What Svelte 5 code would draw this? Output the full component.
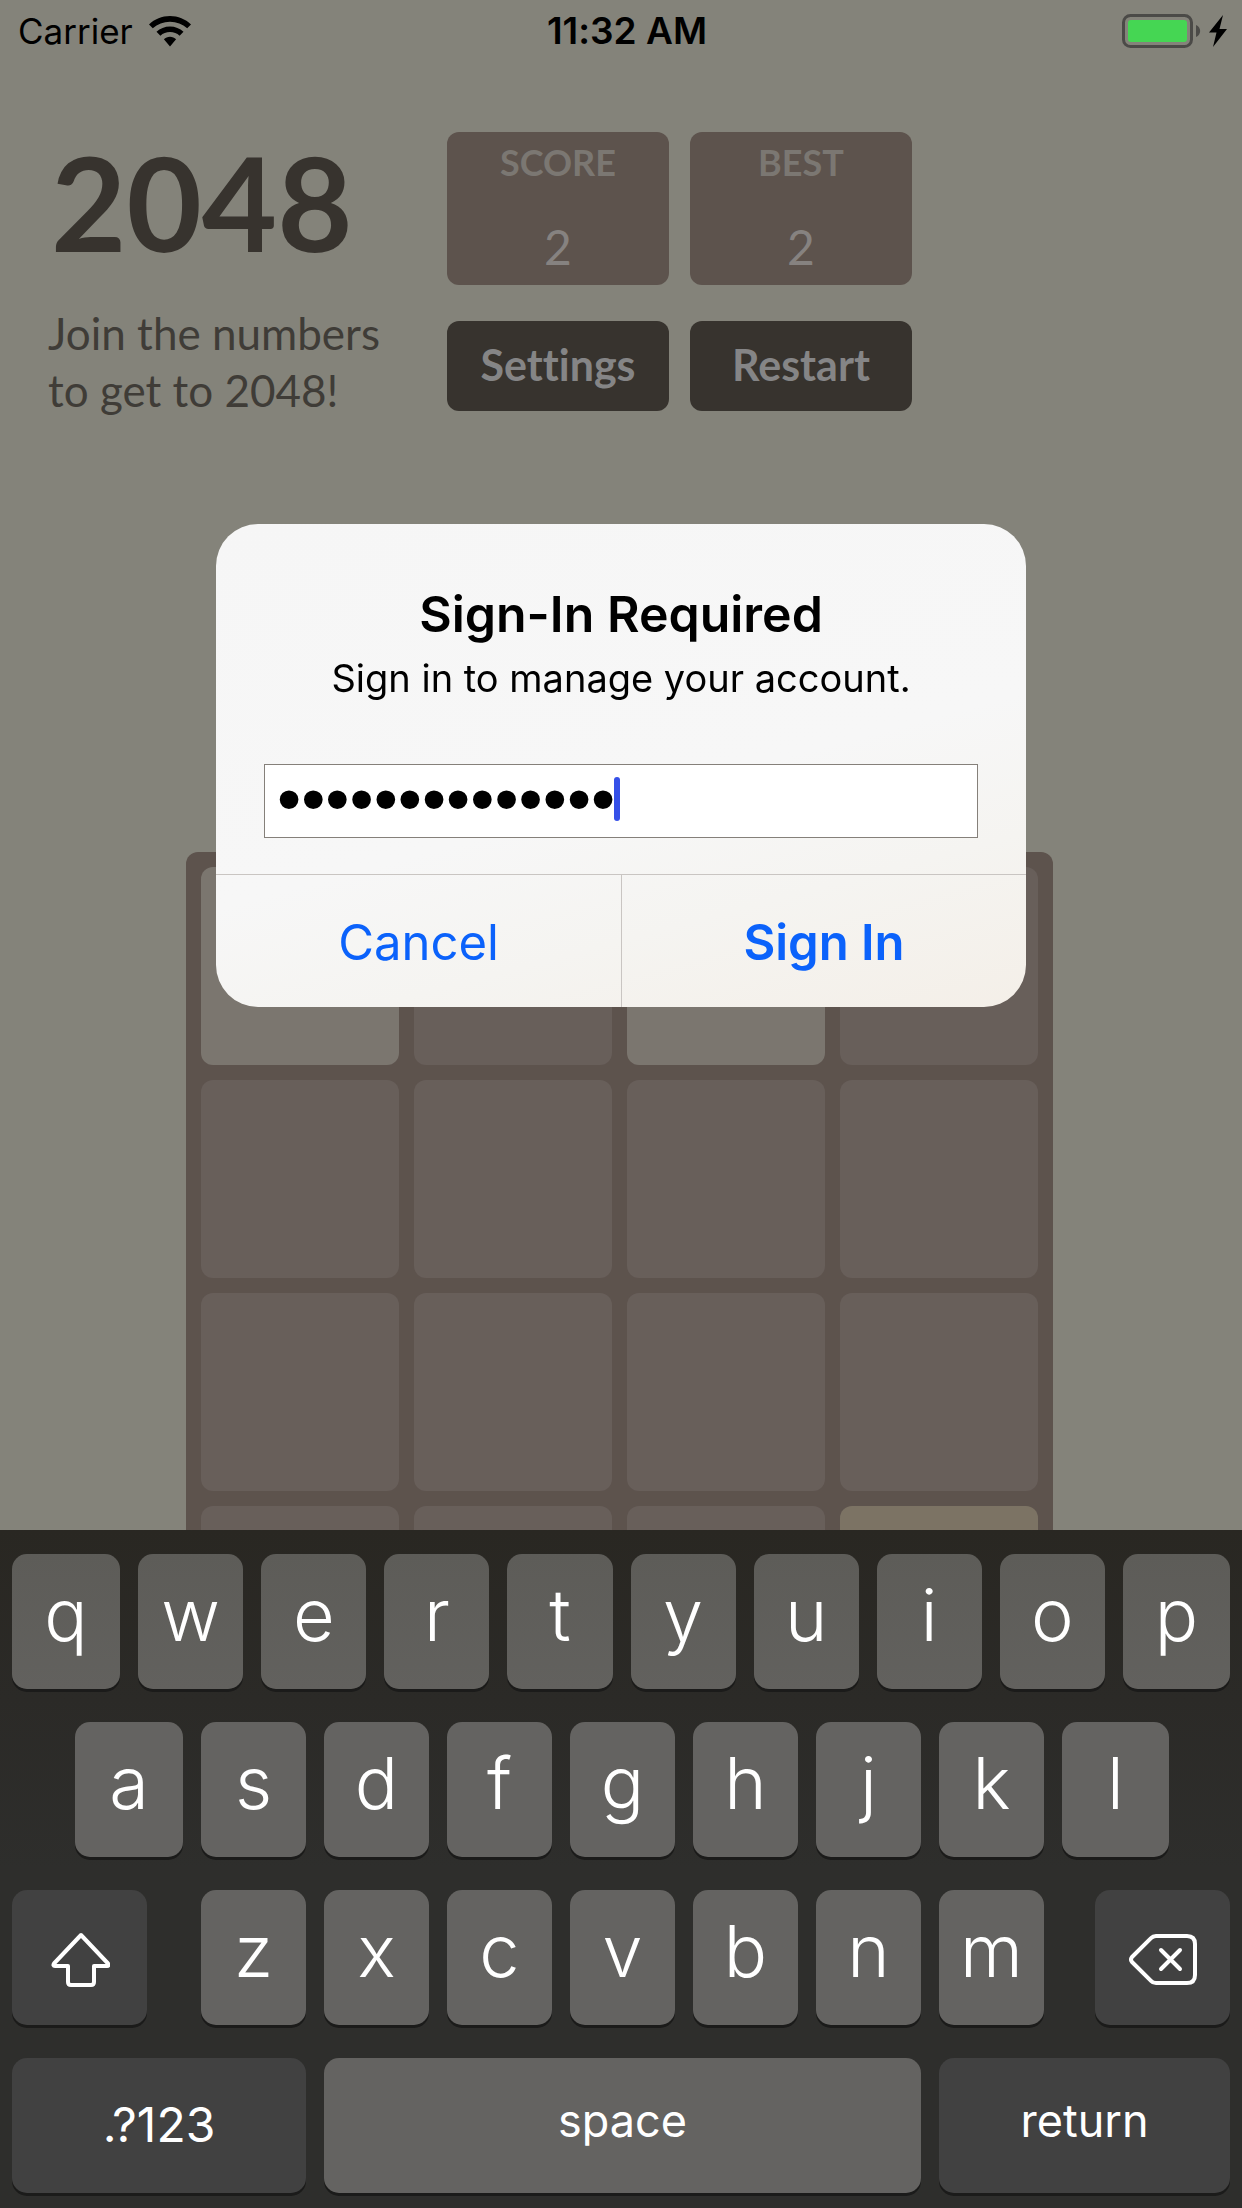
<script>
  const rows = ['qwertyuiop', 'asdfghjkl', 'zxcvbnm'].map((r) => r.split(''));
  const light = [0, 2];
  const cells = Array.from({ length: 16 }, (_, i) =>
    light.includes(i) ? 'two' : i === 15 ? 'four' : ''
  );
  let password = $state('password123456');
</script>

<div class="game">
  <header class="status">
    <div class="carrier">
      <span>Carrier</span>
      <svg width="42" height="31" viewBox="0 0 42 31" aria-hidden="true">
        <path d="M21 0C13 0 5.600 3 0 8.500l3.800 3.800C8.500 8 14.400 5.800 21 5.800s12.500 2.200 17.200 6.500L42 8.500C36.400 3 29 0 21 0z" />
        <path d="M21 10.500c-5.200 0-9.900 2-13.500 5.300l3.900 3.900c2.600-2.300 5.900-3.600 9.600-3.600s7 1.300 9.600 3.600l3.900-3.900C30.900 12.500 26.200 10.500 21 10.500z" />
        <path d="M21 20.800c-2.400 0-4.500.9-6.100 2.400L21 30.500l6.100-7.300c-1.600-1.500-3.700-2.400-6.100-2.400z" />
      </svg>
    </div>
    <time>11:32 AM</time>
    <div class="power">
      <svg width="106" height="34" viewBox="0 0 106 34" aria-label="Battery charging">
        <rect x="1.500" y="1.500" width="68" height="31" rx="7" fill="none" stroke="#4b4a47" stroke-width="3" />
        <rect x="6" y="6" width="59" height="22" rx="3" fill="#45d653" />
        <path d="M74 11c5.500 2 5.500 10 0 12z" fill="#4b4a47" />
        <path d="M101 1L87 18.500h7.500L91 33l14-18h-7.500z" />
      </svg>
    </div>
  </header>

  <section class="top">
    <div class="intro">
      <h1>2048</h1>
      <p>Join the numbers<br />to get to 2048!</p>
    </div>
    <div class="panel">
      <div class="score"><b>SCORE</b><span>2</span></div>
      <div class="score"><b>BEST</b><span>2</span></div>
      <button type="button">Settings</button>
      <button type="button">Restart</button>
    </div>
  </section>

  <div class="board">
    {#each cells as c}<div class="cell {c}"></div>{/each}
  </div>
</div>

<div class="overlay">
  <div class="center">
    <form class="dialog" role="dialog" aria-labelledby="title" onsubmit={(e) => e.preventDefault()}>
      <div class="body">
        <h2 id="title">Sign-In Required</h2>
        <label for="pw">Sign in to manage your account.</label>
        <div class="field">
          <input id="pw" type="password" bind:value={password} />
          <span class="caret"></span>
        </div>
      </div>
      <div class="actions">
        <button type="button">Cancel</button>
        <button type="submit" class="strong">Sign In</button>
      </div>
    </form>
  </div>

  <div class="keyboard">
    <div class="row first">
      {#each rows[0] as k}<button type="button" class="key">{k}</button>{/each}
    </div>
    <div class="row second">
      {#each rows[1] as k}<button type="button" class="key">{k}</button>{/each}
    </div>
    <div class="row third">
      <button type="button" class="key dark" aria-label="Shift">
        <svg width="60" height="62" viewBox="0 0 60 62" aria-hidden="true">
          <path d="M31 3L4 31.500q-1.500 2.500 1 2.500h13v16q0 3 3 3h20q3 0 3-3V34h13q2.500 0 1-2.500z" />
        </svg>
      </button>
      <div class="row letters">
        {#each rows[2] as k}<button type="button" class="key">{k}</button>{/each}
      </div>
      <button type="button" class="key dark" aria-label="Delete">
        <svg width="68" height="60" viewBox="0 0 68 60" aria-hidden="true">
          <path d="M27 3h31q8 0 8 8v31q0 8-8 8H27q-3 0-5-2.200L3 29q-2-2.500 0-5L22 5.200Q24 3 27 3z" />
          <path d="M32 17l19 19M51 17L32 36" />
        </svg>
      </button>
    </div>
    <div class="row fourth">
      <button type="button" class="key dark num">.?123</button>
      <button type="button" class="key word">space</button>
      <button type="button" class="key dark word">return</button>
    </div>
  </div>
</div>

<style>
  :global(body) {
    background: #84837a;
  }
  * {
    box-sizing: border-box;
  }
  h1, h2, p {
    margin: 0;
  }
  button {
    margin: 0;
    padding: 0;
    border: 0;
    background: none;
    font: inherit;
    color: inherit;
    cursor: pointer;
  }
  .game {
    height: 100vh;
    overflow: hidden;
    font-family: Lato, sans-serif;
    font-variant-ligatures: none;
    color: #37332e;
  }
  .status {
    display: grid;
    grid-template-columns: 1fr auto 1fr;
    align-items: center;
    height: 60px;
    padding: 2px 14px 0 18px;
    font-family: Inter, sans-serif;
    font-size: 35px;
    line-height: 58px;
    color: #000;
  }
  .status time {
    font-size: 37px;
    font-weight: 600;
    padding-left: 8px;
  }
  .carrier {
    display: flex;
    align-items: center;
    gap: 16px;
  }
  .power {
    display: flex;
    justify-content: flex-end;
  }
  .top {
    display: flex;
    padding: 72px 48px 0;
  }
  .intro {
    flex: 0 0 399px;
  }
  h1 {
    padding-left: 3px;
    font-size: 130px;
    font-weight: 700;
    line-height: 140px;
  }
  .intro p {
    padding-top: 33px;
    font-size: 44px;
    line-height: 57px;
    color: #3f3c37;
  }
  .panel {
    display: grid;
    grid-template-columns: 222px 222px;
    grid-template-rows: 153px 90px;
    gap: 36px 21px;
  }
  .score {
    display: flex;
    flex-direction: column;
    align-items: center;
    justify-content: space-between;
    padding: 8px 0 10px;
    border-radius: 12px;
    background: #5d534d;
  }
  .score b {
    font-size: 36px;
    line-height: 44px;
    color: #7b7772;
  }
  .score span {
    font-size: 48px;
    line-height: 56px;
    color: #868280;
  }
  .panel button {
    padding-bottom: 4px;
    border-radius: 12px;
    background: #37332e;
    color: #858586;
    font-size: 43px;
    font-weight: 700;
  }
  .board {
    display: grid;
    grid-template-columns: repeat(4, 1fr);
    gap: 15px;
    margin: 433px 189px 0 186px;
    padding: 15px;
    border-radius: 12px;
    background: #5d534d;
  }
  .cell {
    aspect-ratio: 1;
    border-radius: 12px;
    background: #685f5a;
  }
  .two {
    background: #7b766f;
  }
  .four {
    background: #7c7364;
  }
  .overlay {
    position: fixed;
    inset: 0;
    display: flex;
    flex-direction: column;
    font-family: Inter, sans-serif;
  }
  .center {
    flex: 1;
    display: grid;
    place-items: center;
  }
  .dialog {
    width: 810px;
    border-radius: 42px;
    background: linear-gradient(165deg, #f6f6f6 0%, #f7f7f7 55%, #f5f4f1 75%, #f4efe8 100%);
    text-align: center;
    overflow: hidden;
  }
  .body {
    padding: 60px 48px 36px;
  }
  h2 {
    font-size: 50px;
    font-weight: 600;
    line-height: 60px;
  }
  label {
    display: block;
    padding-top: 8px;
    font-size: 38px;
    line-height: 52px;
  }
  .field {
    position: relative;
    margin-top: 60px;
  }
  input {
    display: block;
    width: 100%;
    height: 74px;
    padding: 0 0 4px 12px;
    border: 1px solid #85807a;
    border-radius: 0;
    outline: 0;
    background: #fff;
    color: #000;
    font-family: "Liberation Sans", sans-serif;
    font-size: 69px;
  }
  .caret {
    position: absolute;
    left: 350px;
    top: 13px;
    width: 6px;
    height: 44px;
    border-radius: 3px;
    background: #3550e8;
  }
  .actions {
    display: grid;
    grid-template-columns: 1fr 1fr;
    border-top: 1px solid #c9c5c2;
  }
  .actions button {
    height: 132px;
    color: #0b62fb;
    font-size: 49px;
    padding-top: 4px;
  }
  .actions .strong {
    border-left: 1px solid #c9c5c2;
    font-weight: 600;
  }
  .keyboard {
    display: flex;
    flex-direction: column;
    gap: 33px;
    padding: 24px 0 15px;
    background: linear-gradient(#292722, #2b2a27 25%, #2e2e2c 50%, #2e2e2c);
    color: #fff;
  }
  .row {
    display: grid;
    gap: 18px;
    padding: 0 12px;
  }
  .first {
    grid-template-columns: 108fr repeat(8, 105fr) 107fr;
  }
  .second {
    grid-template-columns: 108fr repeat(7, 105fr) 107fr;
    padding: 0 73px 0 75px;
  }
  .third {
    grid-template-columns: 135fr 846fr 135fr;
    gap: 51px;
  }
  .letters {
    grid-template-columns: repeat(7, 1fr);
    gap: 18px;
    padding: 0 0 0 3px;
  }
  .fourth {
    grid-template-columns: 294fr 597fr 291fr;
  }
  .key {
    display: grid;
    place-items: center;
    min-width: 0;
    height: 135px;
    padding-bottom: 14px;
    border-radius: 15px;
    background: #646361;
    box-shadow: 0 3px 0 #1b1b1a;
    font-size: 72px;
    font-weight: 350;
    line-height: 88px;
  }
  .first .key {
    background: linear-gradient(#5d5c58, #62615e);
  }
  .key.dark {
    background: #414141;
  }
  .key.word {
    font-size: 45px;
    font-weight: 400;
    padding-bottom: 10px;
  }
  .key.num {
    font-size: 48px;
    font-weight: 400;
    padding-bottom: 2px;
  }
  .key svg {
    fill: none;
    stroke: #fff;
    stroke-width: 4;
    stroke-linecap: round;
    stroke-linejoin: round;
    margin-top: 24px;
  }
</style>
